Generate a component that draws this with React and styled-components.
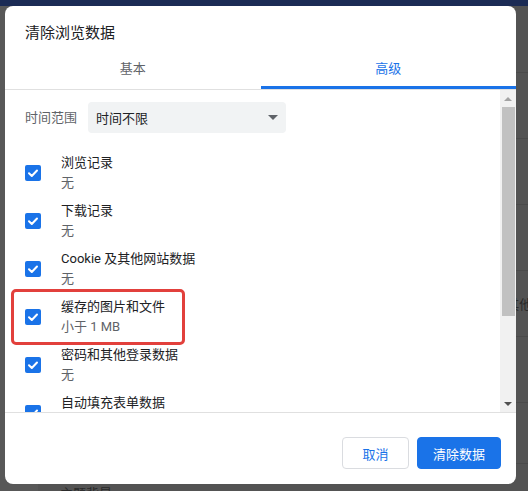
import React from "react";
import styled, { createGlobalStyle } from "styled-components";

const GlobalStyle = createGlobalStyle`
  html, body { margin: 0; padding: 0; }
  body {
    background: #575757;
    font-family: Roboto, "Noto Sans CJK SC", "DejaVu Sans", sans-serif;
    -webkit-font-smoothing: antialiased;
  }
`;

const Page = styled.div`
  position: relative;
  width: 528px;
  height: 491px;
  overflow: hidden;
  background: #585858;
  display: flex;
  flex-direction: column;
`;

const PageHeader = styled.div`
  height: 6px;
  flex: none;
  background: #1b2b55;
`;

const Backdrop = styled.div`
  display: flex;
  flex-direction: column;
  margin-left: 38px;
  padding-top: 66px;
  background: #535353;
  flex: 1;
`;

const BackdropRow = styled.div`
  height: ${(p) => p.$h || 65}px;
  flex: none;
  border-top: 1px solid #4a4a4a;
  display: flex;
  align-items: center;
  padding-left: ${(p) => p.$indent || 20}px;
  color: #2a2a2a;
  font-size: 13px;
  white-space: nowrap;
`;

const Dialog = styled.div`
  position: absolute;
  left: 5px;
  top: 6px;
  width: 511px;
  height: 478px;
  background: #ffffff;
  border-radius: 8px;
  display: flex;
  flex-direction: column;
  overflow: hidden;
`;

const Title = styled.div`
  height: 45px;
  box-sizing: border-box;
  padding: 17px 20px 0;
  font-size: 15px;
  line-height: 20px;
  color: #202124;
`;

const Tabs = styled.div`
  display: flex;
  border-bottom: 1px solid #e0e0e0;
  flex: none;
`;

const Tab = styled.div`
  flex: 1;
  height: 38px;
  box-sizing: border-box;
  padding-bottom: 3px;
  display: flex;
  align-items: center;
  justify-content: center;
  font-size: 13px;
  color: ${(p) => (p.$active ? "#1a73e8" : "#5f6368")};
  border-bottom: 3px solid ${(p) => (p.$active ? "#1a73e8" : "transparent")};
`;

const Body = styled.div`
  height: 322px;
  flex: none;
  display: flex;
  border-bottom: 1px solid #e0e0e0;
`;

const List = styled.div`
  flex: 1;
  overflow: hidden;
  padding: 12px 0 0 20px;
  display: flex;
  flex-direction: column;
`;

const RangeRow = styled.div`
  display: flex;
  align-items: center;
  gap: 11px;
  margin-bottom: 16px;
`;

const RangeLabel = styled.div`
  font-size: 13px;
  color: #5f6368;
  line-height: 20px;
`;

const Select = styled.div`
  width: 198px;
  height: 31px;
  box-sizing: border-box;
  background: #f1f3f4;
  border-radius: 4px;
  display: flex;
  align-items: center;
  justify-content: space-between;
  padding: 0 8px 0 8px;
  font-size: 13px;
  color: #202124;
`;

const Item = styled.div`
  position: relative;
  display: flex;
  align-items: center;
  gap: 20px;
  height: 48px;
  flex: none;
`;

const Box = styled.div`
  width: 16px;
  height: 16px;
  border-radius: 2px;
  background: #1a73e8;
  display: flex;
  align-items: center;
  justify-content: center;
  flex: none;
`;

const ItemText = styled.div`
  display: flex;
  flex-direction: column;
`;

const ItemLabel = styled.div`
  font-size: 13px;
  line-height: 20px;
  color: #202124;
  white-space: nowrap;
`;

const ItemSub = styled.div`
  font-size: 13px;
  line-height: 20px;
  color: #5f6368;
`;

const Highlight = styled.div`
  position: absolute;
  left: -14px;
  top: -4px;
  width: 174px;
  height: 56px;
  box-sizing: border-box;
  border: 3px solid #e2403c;
  border-radius: 5px;
  pointer-events: none;
`;

const ScrollBar = styled.div`
  width: 16px;
  flex: none;
  background: #f1f1f1;
  display: flex;
  flex-direction: column;
`;

const ScrollButton = styled.div`
  height: 17px;
  flex: none;
  display: flex;
  align-items: center;
  justify-content: center;
`;

const Track = styled.div`
  flex: 1;
  display: flex;
  flex-direction: column;
`;

const Thumb = styled.div`
  margin-left: 2px;
  width: 13px;
  background: #c1c1c1;
`;

const Footer = styled.div`
  flex: 1;
  display: flex;
  justify-content: flex-end;
  align-items: flex-start;
  gap: 8px;
  padding: 24px 15px 0 0;
`;

const Button = styled.button`
  height: 32px;
  padding: 0;
  width: ${(p) => (p.$primary ? 84 : 67)}px;
  box-sizing: border-box;
  border-radius: 4px;
  font-family: Roboto, "Noto Sans CJK SC", sans-serif;
  font-size: 13px;
  cursor: pointer;
  border: 1px solid ${(p) => (p.$primary ? "#1a73e8" : "#dadce0")};
  background: ${(p) => (p.$primary ? "#1a73e8" : "#ffffff")};
  color: ${(p) => (p.$primary ? "#ffffff" : "#1a73e8")};
`;

const Check = () => (
  <svg width="12" height="12" viewBox="0 0 12 12">
    <polyline
      points="2,6.3 4.8,9 10,3.5"
      fill="none"
      stroke="#fff"
      strokeWidth="2"
      strokeLinecap="round"
      strokeLinejoin="round"
    />
  </svg>
);

const Caret = ({ color, up, w = 10, h = 5 }) => (
  <svg width={w} height={h} viewBox={`0 0 ${w} ${h}`}>
    <polygon
      points={up ? `0,${h} ${w / 2},0 ${w},${h}` : `0,0 ${w},0 ${w / 2},${h}`}
      fill={color}
    />
  </svg>
);

const items = [
  { label: "浏览记录", sub: "无" },
  { label: "下载记录", sub: "无" },
  { label: "Cookie 及其他网站数据", sub: "无" },
  { label: "缓存的图片和文件", sub: "小于 1 MB", highlight: true },
  { label: "密码和其他登录数据", sub: "无" },
  { label: "自动填充表单数据", sub: "无" },
];

export default function App() {
  return (
    <>
      <GlobalStyle />
      <Page>
        <PageHeader />
        <Backdrop>
          <BackdropRow />
          <BackdropRow />
          <BackdropRow />
          <BackdropRow $indent={412}>Cookie 及其他网站数据</BackdropRow>
          <BackdropRow />
          <BackdropRow $h={60} />
          <BackdropRow $h={56} $indent={22}>主题背景</BackdropRow>
        </Backdrop>
        <Dialog>
          <Title>清除浏览数据</Title>
          <Tabs>
            <Tab>基本</Tab>
            <Tab $active>高级</Tab>
          </Tabs>
          <Body>
            <List>
              <RangeRow>
                <RangeLabel>时间范围</RangeLabel>
                <Select>
                  <span>时间不限</span>
                  <Caret color="#5f6368" w={10} h={5} />
                </Select>
              </RangeRow>
              {items.map((it) => (
                <Item key={it.label}>
                  <Box>
                    <Check />
                  </Box>
                  <ItemText>
                    <ItemLabel>{it.label}</ItemLabel>
                    <ItemSub>{it.sub}</ItemSub>
                  </ItemText>
                  {it.highlight && <Highlight />}
                </Item>
              ))}
            </List>
            <ScrollBar>
              <ScrollButton>
                <Caret color="#a3a3a3" up w={8} h={4} />
              </ScrollButton>
              <Track>
                <Thumb style={{ height: 209 }} />
              </Track>
              <ScrollButton>
                <Caret color="#505050" w={8} h={4} />
              </ScrollButton>
            </ScrollBar>
          </Body>
          <Footer>
            <Button>取消</Button>
            <Button $primary>清除数据</Button>
          </Footer>
        </Dialog>
      </Page>
    </>
  );
}
